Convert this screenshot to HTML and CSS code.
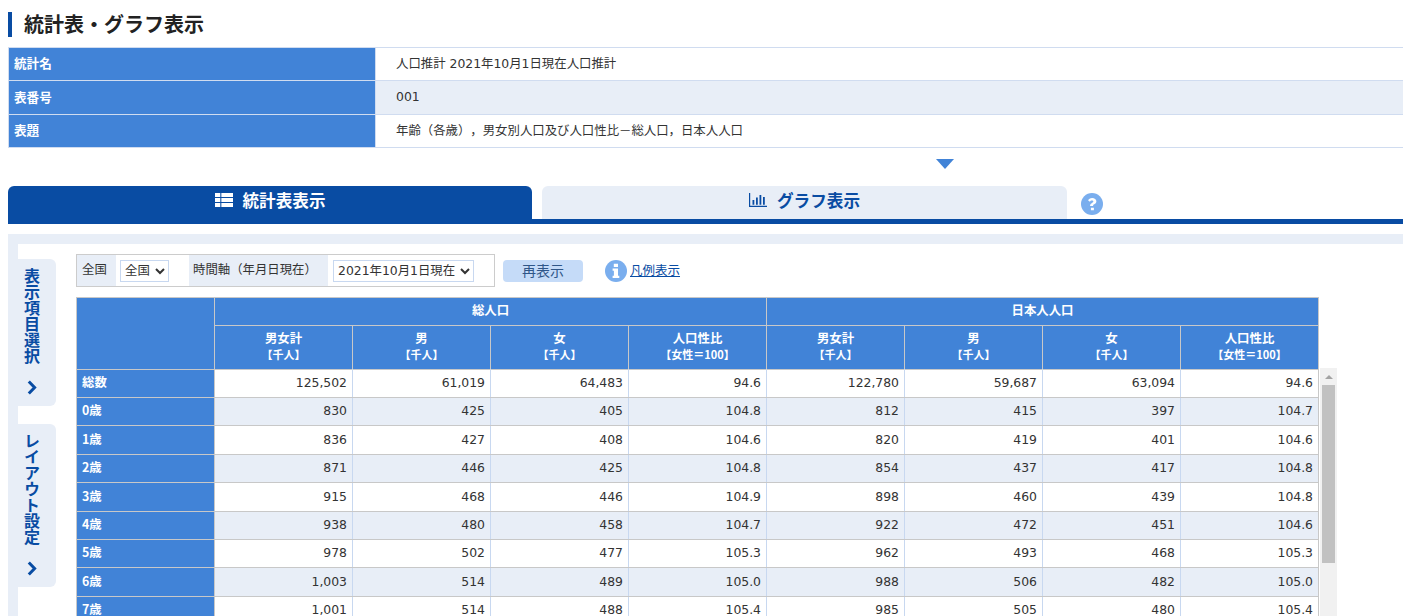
FILE: index.html
```html
<!DOCTYPE html>
<html lang="ja">
<head>
<meta charset="utf-8">
<title>統計表・グラフ表示</title>
<link rel="stylesheet" href="styles.css">
</head>
<body>
<h1 class="page-title">統計表・グラフ表示</h1>
<table class="info">
  <tr><th>統計名</th><td>人口推計 2021年10月1日現在人口推計</td></tr>
  <tr class="alt"><th>表番号</th><td>001</td></tr>
  <tr><th>表題</th><td>年齢（各歳），男女別人口及び人口性比－総人口，日本人人口</td></tr>
</table>
<div class="toggle"><span class="toggle-arrow"></span></div>
<div class="tabs">
  <a class="tab active">
    <svg class="tab-icon" viewBox="0 0 17 13"><path fill="currentColor" d="M0 0h5v3.600H0zM6 0h11v3.600H6zM0 4.700h5v3.600H0zM6 4.700h11v3.600H6zM0 9.400h5V13H0zM6 9.400h11V13H6z"/></svg>
    統計表表示
  </a>
  <a class="tab">
    <svg class="tab-icon" viewBox="0 0 18 14"><path fill="currentColor" d="M0 0h1.200v12.800H18V14H0zM3.500 7h1.800v4.800H3.500zM7 4.500h1.800v7.300H7zM10.500 2h1.800v9.800h-1.800zM14 4h1.800v7.800H14z"/></svg>
    グラフ表示
  </a>
  <svg class="help" viewBox="0 0 22 22"><circle cx="11" cy="11" r="11" fill="#7aaeee"/><path fill="#fff" d="M11.200 5c-2.100 0-3.400 1-4.200 2.300l1.900 1.400c.5-.7 1-1.100 2-1.100.8 0 1.400.4 1.400 1 0 .7-.5 1-1.300 1.400-.9.500-1.900 1.100-1.900 2.600v.5h3v-.4c0-.7.4-1 1.200-1.400 1-.6 2.100-1.300 2.100-3 0-2-2-3.300-4.200-3.300zM9.900 14.700h3v2.600h-3z"/></svg>
</div>
<div class="panel">
  <aside class="side">
    <div class="side-tab"><span class="side-text">表示項目選択</span><svg class="chevron" viewBox="0 0 10 15"><path fill="none" stroke="currentColor" stroke-width="3" d="M1.800 1.500l5.800 6-5.800 6"/></svg></div>
    <div class="side-tab"><span class="side-text">レイアウト設定</span><svg class="chevron" viewBox="0 0 10 15"><path fill="none" stroke="currentColor" stroke-width="3" d="M1.800 1.500l5.800 6-5.800 6"/></svg></div>
  </aside>
  <main class="main">
    <div class="controls">
      <div class="filter">
        <span class="f-label">全国</span>
        <span class="f-field f-area"><select class="sel sel-area"><option>全国</option></select></span>
        <span class="f-label f-time">時間軸（年月日現在）</span>
        <span class="f-field"><select class="sel sel-time"><option>2021年10月1日現在</option></select></span>
      </div>
      <button class="redraw">再表示</button>
      <svg class="info-icon" viewBox="0 0 22 22"><circle cx="11" cy="11" r="11" fill="#7aaeee"/><path fill="#fff" d="M8.800 3.800h4.200v3.200H8.800zM7.600 8.600h5.400v7.200h1.300V18H7.600v-2.200h1.300v-5H7.600z"/></svg>
      <a class="legend" href="#">凡例表示</a>
    </div>
    <table class="grid head">
      <tr>
        <th rowspan="2" class="corner"></th>
        <th colspan="4" class="top">総人口</th>
        <th colspan="4" class="top">日本人人口</th>
      </tr>
      <tr class="sub">
        <th>男女計<small>【千人】</small></th><th>男<small>【千人】</small></th><th>女<small>【千人】</small></th><th>人口性比<small>【女性＝100】</small></th>
        <th>男女計<small>【千人】</small></th><th>男<small>【千人】</small></th><th>女<small>【千人】</small></th><th>人口性比<small>【女性＝100】</small></th>
      </tr>
    </table>
    <div class="scroll">
      <table class="grid body">
        <tr><th>総数</th><td>125,502</td><td>61,019</td><td>64,483</td><td>94.6</td><td>122,780</td><td>59,687</td><td>63,094</td><td>94.6</td></tr>
        <tr><th>0歳</th><td>830</td><td>425</td><td>405</td><td>104.8</td><td>812</td><td>415</td><td>397</td><td>104.7</td></tr>
        <tr><th>1歳</th><td>836</td><td>427</td><td>408</td><td>104.6</td><td>820</td><td>419</td><td>401</td><td>104.6</td></tr>
        <tr><th>2歳</th><td>871</td><td>446</td><td>425</td><td>104.8</td><td>854</td><td>437</td><td>417</td><td>104.8</td></tr>
        <tr><th>3歳</th><td>915</td><td>468</td><td>446</td><td>104.9</td><td>898</td><td>460</td><td>439</td><td>104.8</td></tr>
        <tr><th>4歳</th><td>938</td><td>480</td><td>458</td><td>104.7</td><td>922</td><td>472</td><td>451</td><td>104.6</td></tr>
        <tr><th>5歳</th><td>978</td><td>502</td><td>477</td><td>105.3</td><td>962</td><td>493</td><td>468</td><td>105.3</td></tr>
        <tr><th>6歳</th><td>1,003</td><td>514</td><td>489</td><td>105.0</td><td>988</td><td>506</td><td>482</td><td>105.0</td></tr>
        <tr><th>7歳</th><td>1,001</td><td>514</td><td>488</td><td>105.4</td><td>985</td><td>505</td><td>480</td><td>105.4</td></tr>
      </table>
      <div class="scrollbar"><span class="sb-up"></span><span class="sb-thumb"></span></div>
    </div>
  </main>
</div>
</body>
</html>
```
FILE: styles.css
```css
* { box-sizing: border-box; }
html, body { height: 616px; overflow: hidden; }
body {
  margin: 0;
  width: 1403px;
  background: #fff;
  color: #333;
  font-family: "DejaVu Sans", "Noto Sans CJK JP", sans-serif;
  font-size: 12.400px;
  text-spacing-trim: space-all;
}
.page-title {
  margin: 12px 0 10px 8px;
  height: 25px;
  padding-left: 12px;
  border-left: 4px solid #094ca3;
  color: #222;
  font-family: "Noto Sans CJK JP", sans-serif;
  font-size: 20px;
  font-weight: 700;
  line-height: 24px;
}
.info {
  margin-left: 8px;
  width: 1395px;
  border-collapse: collapse;
  table-layout: fixed;
}
.info th, .info td {
  height: 33.400px;
  border: 1px solid #d0dcf0;
  border-right: 0;
  padding: 0 0 2px;
}
.info th {
  width: 367px;
  padding: 0 0 3px 5px;
  background: #4183d7;
  color: #fff;
  font-family: "Noto Sans CJK JP", sans-serif;
  font-size: 12.600px;
  font-weight: 700;
  text-align: left;
}
.info td { padding-left: 20px; }
.info .alt td { background: #e8eef7; }
.toggle {
  display: flex;
  justify-content: center;
  height: 38px;
  padding: 11px 0 0 486px;
}
.toggle-arrow {
  width: 0;
  height: 0;
  border-style: solid;
  border-width: 10px 9px 0;
  border-color: #4183d7 transparent transparent;
}
.tabs {
  display: flex;
  gap: 10px;
  height: 38px;
  margin-left: 8px;
  border-bottom: 5px solid #094ca3;
}
.tab {
  display: flex;
  align-items: center;
  justify-content: center;
  gap: 10px;
  width: 525px;
  height: 33px;
  padding-bottom: 5px;
  border-radius: 6px 6px 0 0;
  background: #e8eef7;
  color: #094ca3;
  font-family: "Noto Sans CJK JP", sans-serif;
  font-size: 16.600px;
  font-weight: 700;
}
.tab.active {
  width: 524px;
  background: #094ca3;
  color: #fff;
}
.tab-icon { width: 18px; height: 14px; }
.help { width: 22px; height: 22px; margin: 7px 0 0 4px; }
.panel {
  display: flex;
  margin: 10px 0 0 8px;
  border: solid #e8eef7;
  border-width: 10px 0 0 10px;
}
.side {
  display: flex;
  flex-direction: column;
  gap: 18px;
  flex: none;
  width: 38px;
  padding-top: 15px;
}
.side-tab {
  display: flex;
  flex-direction: column;
  align-items: center;
  gap: 16px;
  padding: 9px 10px 11px 0;
  border-radius: 0 6px 6px 0;
  background: #e8eef7;
  color: #094ca3;
}
.side-text {
  writing-mode: vertical-rl;
  width: 28px;
  font-family: "Noto Sans CJK JP", sans-serif;
  font-size: 16px;
  font-weight: 700;
  line-height: 28px;
}
.chevron { width: 10px; height: 15px; }
.main { margin-left: 20px; padding-top: 10px; }
.controls {
  display: flex;
  align-items: center;
  height: 33px;
  margin-bottom: 10px;
}
.filter {
  display: flex;
  align-items: stretch;
  flex: none;
  height: 33px;
  width: 419px;
  border: 1px solid #ccc;
  font-family: "Noto Sans CJK JP", sans-serif;
}
.f-label {
  display: flex;
  align-items: center;
  flex: none;
  width: 39px;
  padding: 0 0 4px 5px;
  background: #e8eef7;
}
.f-time { width: 139px; padding-left: 4px; }
.f-field { display: flex; align-items: center; padding: 0 5px; }
.f-area { width: 73px; padding-left: 4px; }
.sel {
  height: 22px;
  padding: 0;
  border: 1px solid #c8d8f0;
  border-radius: 0;
  background: #fff;
  color: #333;
  font: 12.400px "DejaVu Sans", "Noto Sans CJK JP", sans-serif;
}
.sel-area { width: 49px; }
.sel-time { width: 141px; }
.redraw {
  width: 80px;
  height: 22px;
  margin-left: 8px;
  padding: 0 0 4px;
  border: 0;
  border-radius: 4px;
  background: #c5dbf8;
  color: #2f5688;
  font: 14px "Noto Sans CJK JP", sans-serif;
}
.info-icon { width: 22px; height: 22px; margin-left: 22px; }
.legend {
  margin: 0 0 2px 3px;
  color: #094ca3;
  font-family: "Noto Sans CJK JP", sans-serif;
  font-size: 12.500px;
}
.grid {
  width: 1243px;
  border-collapse: collapse;
  table-layout: fixed;
}
.grid th, .grid td {
  padding: 0;
  border: 1px solid #c8c8c8;
}
.grid th {
  background: #4183d7;
  color: #fff;
  font-family: "Noto Sans CJK JP", sans-serif;
  font-weight: 700;
}
.head .top { height: 28px; padding-bottom: 4px; }
.head .sub th { height: 44px; padding-bottom: 3px; line-height: 16px; }
.head small { display: block; font-size: 11px; }
.scroll { display: flex; align-items: flex-start; }
.body { flex: none; margin-top: -1px; }
.body th {
  height: 28px;
  padding: 0 0 3px 5px;
  text-align: left;
}
.body tr:nth-child(3) th,
.body tr:nth-child(5) th,
.body tr:nth-child(8) th { height: 29px; }
.body td {
  padding: 0 5px 2px 0;
  border-left-color: #c8d8f0;
  border-right-color: #c8d8f0;
  text-align: right;
}
.body td:last-child { border-right-color: #c8c8c8; }
.body tr:nth-child(even) td { background: #e8eef7; }
.scrollbar {
  position: relative;
  flex: none;
  width: 17px;
  height: 248px;
  margin: -2px 0 0 1px;
  background: #f1f1f1;
}
.sb-up {
  position: absolute;
  left: 5px;
  top: 7px;
  width: 0;
  height: 0;
  border-style: solid;
  border-width: 0 4px 4px;
  border-color: transparent transparent #a3a3a3;
}
.sb-thumb {
  position: absolute;
  left: 2px;
  top: 17px;
  width: 13px;
  height: 178px;
  background: #c1c1c1;
}
```
